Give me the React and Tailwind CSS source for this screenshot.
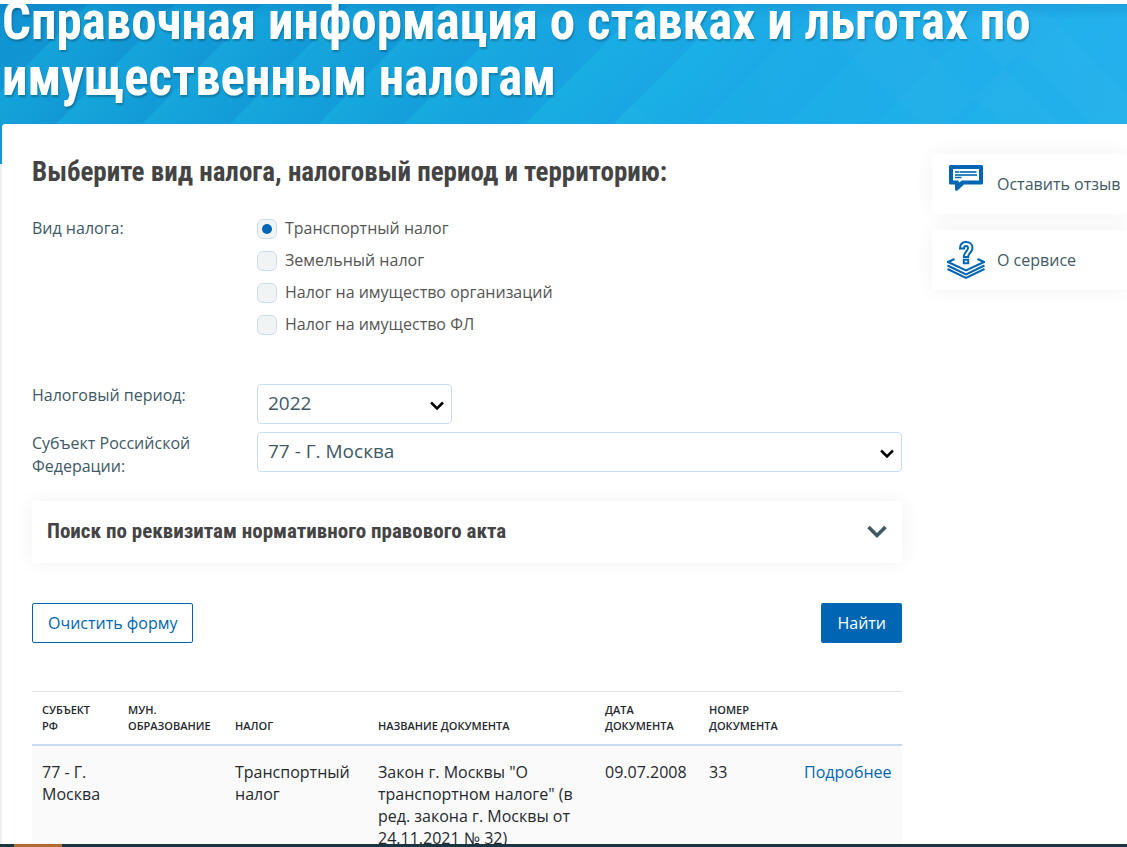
import React, { useState } from 'react';

const headingFont = "font-['Roboto_Condensed','Liberation_Sans_Narrow','Roboto',sans-serif]";

const taxTypes = [
    { id: 'transport', label: 'Транспортный налог' },
    { id: 'land', label: 'Земельный налог' },
    { id: 'org', label: 'Налог на имущество организаций' },
    { id: 'person', label: 'Налог на имущество ФЛ' },
];

const columns = [
    { title: 'Субъект РФ', width: 'w-[86px] pr-5' },
    { title: 'Мун. образование', width: 'w-[107px] pr-2' },
    { title: 'Налог', width: 'w-[143px] pr-2' },
    { title: 'Название документа', width: 'w-[227px] pr-2' },
    { title: 'Дата документа', width: 'w-[104px] pr-2' },
    { title: 'Номер документа', width: 'w-[95px] pr-2' },
    { title: '', width: 'w-[108px] pr-2' },
];

const rows = [
    {
        region: '77 - Г. Москва',
        municipality: '',
        tax: 'Транспортный налог',
        name: 'Закон г. Москвы "О транспортном налоге" (в ред. закона г. Москвы от 24.11.2021 № 32)',
        date: '09.07.2008',
        number: '33',
    },
];

// bottom-left corners of the diagonal bands in the banner
const bands = [-32, 56, 142, 230, 318, 404, 525, 614, 702, 788, 874, 960];

function BannerBackground() {
    return (
        <svg className="absolute inset-x-0 top-0 h-40 w-full" viewBox="0 0 1127 160" preserveAspectRatio="none" aria-hidden="true">
            <defs>
                <linearGradient id="banner" x1="0" x2="1" y1="0" y2="0">
                    <stop offset="0" stopColor="#1092d1" />
                    <stop offset="0.35" stopColor="#1399d8" />
                    <stop offset="0.6" stopColor="#1aa6e5" />
                    <stop offset="1" stopColor="#24b0ed" />
                </linearGradient>
                <linearGradient id="teal" x1="0" x2="0" y1="0" y2="1">
                    <stop offset="0" stopColor="#18b8e2" stopOpacity="0" />
                    <stop offset="1" stopColor="#18b8e2" stopOpacity="0.35" />
                </linearGradient>
                <linearGradient id="band" gradientUnits="userSpaceOnUse" x1="60" x2="104" y1="60" y2="104">
                    <stop offset="0" stopColor="#1cc4e8" stopOpacity="0.32" />
                    <stop offset="1" stopColor="#1cc4e8" stopOpacity="0" />
                </linearGradient>
                <linearGradient id="edge" x1="0" x2="0" y1="0" y2="1">
                    <stop offset="0" stopColor="#066fb0" stopOpacity="0.25" />
                    <stop offset="1" stopColor="#066fb0" stopOpacity="0" />
                </linearGradient>
            </defs>
            <rect width="1127" height="160" fill="url(#banner)" />
            <rect width="1127" height="160" fill="url(#teal)" opacity="0.6" />
            {bands.map((x) => (
                <path key={x} transform={`translate(${x})`} d="M0 120 120 0h88L88 120Z" fill="url(#band)" opacity={x > 650 ? 0.4 : 1} />
            ))}
            <path d="M850 50 920 120H1000L880 0H800ZM970 96 1020 50 1090 120H946ZM940 0 1062 120H1127V90L1036 0ZM632 98 610 120H654Z" fill="#fff" opacity="0.02" />
            <rect width="1127" height="16" fill="url(#edge)" />
        </svg>
    );
}

function FeedbackIcon() {
    return (
        <svg className="mb-3 ml-[2px] h-[26px] w-[34px]" viewBox="0 0 34 26" aria-hidden="true">
            <path fill="#0066b3" fillRule="evenodd" d="M1.5 0h31A1.5 1.5 0 0 1 34 1.5V18a1.5 1.5 0 0 1-1.5 1.5H15L8.500 25.500Q6.500 26.500 6 24.500V19.500H1.500A1.500 1.500 0 0 1 0 18V1.500A1.500 1.500 0 0 1 1.500 0ZM4 4v11.500h5l1.500 2 2-2H30V4Z" />
            <path stroke="#0066b3" strokeWidth="2" strokeOpacity="0.8" d="M6 7h4M10.500 7h17M6 10h22" />
            <path stroke="#0066b3" strokeWidth="1.500" d="M6 12.500h6.500" />
        </svg>
    );
}

function AboutIcon() {
    return (
        <svg className="h-[38px] w-[38px]" viewBox="0 0 38 38" fill="none" stroke="#0066b3" strokeWidth="2" aria-hidden="true">
            <path d="M7.500 18 1 21 19 29.500 37 21 30.500 18" />
            <path d="M.5 24.500 19 33.300 37.500 24.500M.5 28 19 36.800 37.500 28" />
            <path d="M13 7.500C13 3 15.500 1 19 1s6.500 2.200 6.500 6c0 4.500-4.300 5-4.300 9h-4.400c0-5.500 4.200-5.500 4.200-9 0-1.300-.8-2-2-2s-2 .9-2 2.500Z" />
            <path d="M16.800 18.800h4.400v3.400h-4.400Z" />
        </svg>
    );
}

function Chevron({ className }) {
    return (
        <svg className={className} viewBox="0 0 20 14" fill="none" stroke="currentColor" strokeWidth="3.6" aria-hidden="true">
            <path d="m1.500 2 8.500 8.500L18.500 2" />
        </svg>
    );
}

function SelectBox({ id, options, className }) {
    return (
        <div className={`relative ${className}`}>
            <select id={id} className="block h-10 w-full appearance-none rounded-[4px] border border-[#c9dcf2] bg-white pb-px pl-[10px] pr-8 text-[19px] text-[#405965]">
                {options.map((o) => <option key={o}>{o}</option>)}
            </select>
            <Chevron className="pointer-events-none absolute right-2 top-[17px] h-[10px] w-[14px] text-black" />
        </div>
    );
}

function SideLink({ icon, children }) {
    return (
        <a href="#" className="flex h-[60px] items-center rounded-l-[3px] bg-white pl-[15px] text-[#405965] shadow-[0_0_20px_rgba(0,0,0,0.06)]">
            <span className="flex w-[50px] shrink-0">{icon}</span>
            <span className="whitespace-nowrap">{children}</span>
        </a>
    );
}

export default function App() {
    const [taxType, setTaxType] = useState('transport');

    return (
        <div className="flex h-screen flex-col overflow-hidden bg-white pt-1 font-['Open_Sans',sans-serif] text-base text-[#24292e]">
            <div className="relative min-h-0 flex-1 overflow-hidden bg-[#ecf0f5]">
                <BannerBackground />
                <header className="relative h-[120px] overflow-hidden">
                    <h1 className={`-mt-[10px] pl-[2px] text-[51px] leading-[56px] font-bold text-white [text-shadow:1px_2px_2px_rgba(0,0,0,0.25)] ${headingFont}`}>
                        Справочная информация о ставках и льготах по имущественным налогам
                    </h1>
                </header>

                <div className="relative ml-[2px] flex min-h-full gap-[30px] rounded-tl-[3px] bg-white pt-[30px] pl-[30px]">
                    <main className="min-w-0 flex-1">
                        <form onSubmit={(e) => e.preventDefault()}>
                            <h2 className={`text-[27px] leading-9 font-bold text-[#444] ${headingFont}`}>
                                Выберите вид налога, налоговый период и территорию:
                            </h2>

                            <fieldset className="mt-[22px] flex">
                                <legend className="float-left w-[225px] shrink-0 leading-8 text-[#405965]">Вид налога:</legend>
                                <div>
                                    {taxTypes.map((t) => (
                                        <label key={t.id} className="flex h-8 items-center gap-2 text-[#555]">
                                            <input
                                                type="radio"
                                                name="taxType"
                                                checked={taxType === t.id}
                                                onChange={() => setTaxType(t.id)}
                                                className="mt-[2px] grid size-5 appearance-none place-items-center rounded-[6px] border border-[#c9dcf2] bg-[#f2f3f5] checked:before:size-[10px] checked:before:rounded-full checked:before:bg-[#0066b3]"
                                            />
                                            {t.label}
                                        </label>
                                    ))}
                                </div>
                            </fieldset>

                            <div className="mt-11 flex">
                                <label htmlFor="period" className="w-[225px] shrink-0 leading-[23px] text-[#405965]">Налоговый период:</label>
                                <SelectBox id="period" options={['2022', '2021', '2020']} className="w-[195px]" />
                            </div>
                            <div className="mt-2 flex">
                                <label htmlFor="region" className="w-[225px] shrink-0 pr-10 leading-[23px] text-[#405965]">Субъект Российской Федерации:</label>
                                <SelectBox id="region" options={['77 - Г. Москва']} className="flex-1" />
                            </div>

                            <button type="button" className="mt-[23px] flex h-[62px] w-full items-center justify-between bg-white px-[15px] shadow-[0_0_20px_rgba(0,0,0,0.06)]">
                                <span className={`text-[21px] font-bold text-[#444] ${headingFont}`}>Поиск по реквизитам нормативного правового акта</span>
                                <Chevron className="h-[14px] w-5 text-[#405965]" />
                            </button>

                            <div className="mt-10 flex justify-between">
                                <button type="button" className="h-10 rounded-[2px] border border-[#0066b3] px-[15px] text-[#0066b3]">Очистить форму</button>
                                <button type="submit" className="h-10 rounded-[2px] bg-[#0066b3] px-4 font-medium text-white">Найти</button>
                            </div>
                        </form>

                        <table className="mt-12 w-full table-fixed border-collapse text-left">
                            <thead>
                                <tr className="border-t border-b-2 border-t-[#e4e5e7] border-b-[#c9dcf2]">
                                    {columns.map((c) => (
                                        <th key={c.title} scope="col" className={`${c.width} py-[10px] pl-[10px] align-bottom text-[11px] leading-4 font-semibold uppercase`}>{c.title}</th>
                                    ))}
                                </tr>
                            </thead>
                            <tbody>
                                {rows.map((r) => (
                                    <tr key={r.number} className="bg-[#fafafa] align-top leading-[22px] *:px-[10px] *:py-[15px]">
                                        <td>{r.region}</td>
                                        <td>{r.municipality}</td>
                                        <td>{r.tax}</td>
                                        <td>{r.name}</td>
                                        <td>{r.date}</td>
                                        <td>{r.number}</td>
                                        <td><a href="#" className="text-[#0066b3]">Подробнее</a></td>
                                    </tr>
                                ))}
                            </tbody>
                        </table>
                    </main>

                    <aside className="flex w-[195px] shrink-0 flex-col gap-4">
                        <SideLink icon={<FeedbackIcon />}>Оставить отзыв</SideLink>
                        <SideLink icon={<AboutIcon />}>О сервисе</SideLink>
                    </aside>
                </div>
            </div>
            <div className="flex h-[3px] shrink-0 bg-[#1c3440] pl-[14px]">
                <div className="w-12 bg-[#b06a34]" />
            </div>
        </div>
    );
}
